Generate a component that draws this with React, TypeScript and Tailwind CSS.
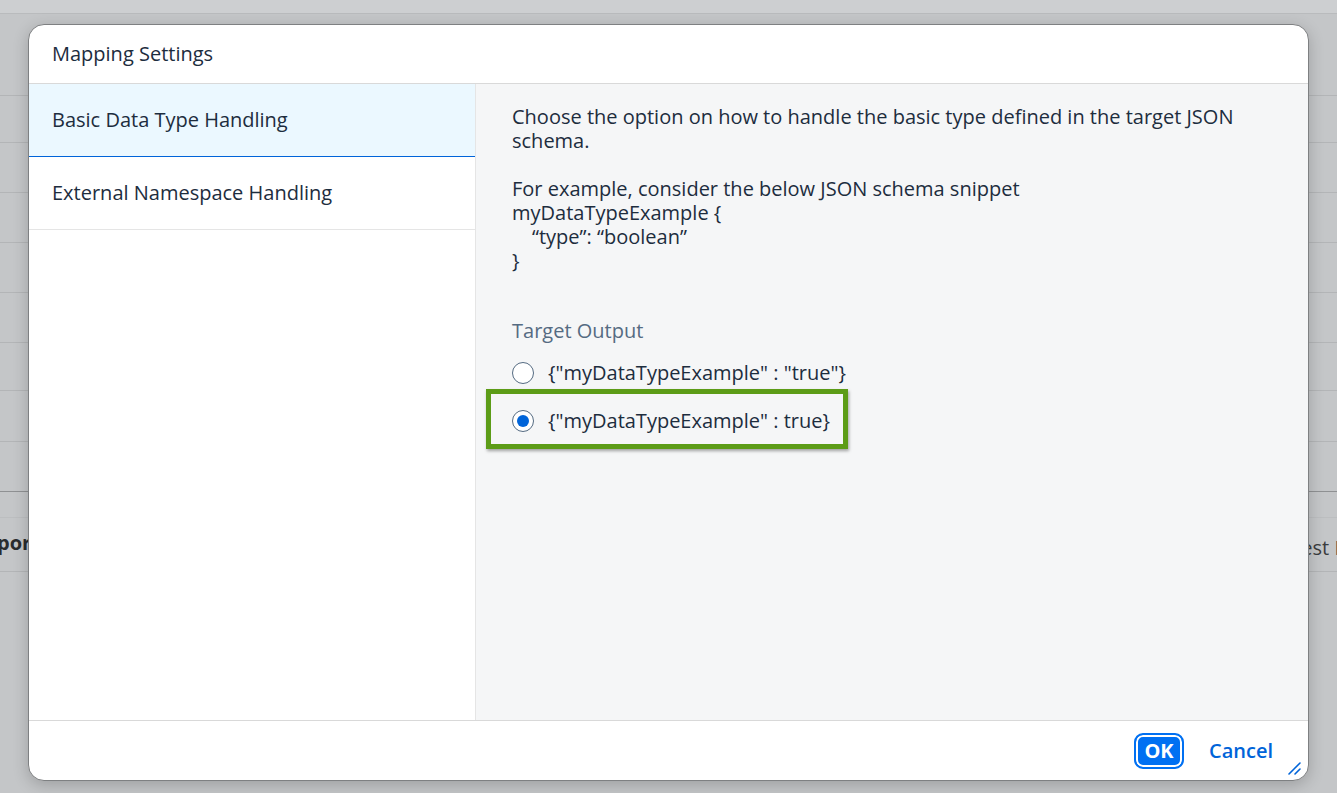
import React, { useState } from 'react';

const ROWS = [
  { h: 'h-[14px]', cls: 'bg-[#cdcfd1] border-b border-[#b9bbbd]' },
  { h: 'h-[82px]', cls: 'border-b border-[#b3b5b7]' },
  { h: 'h-[47px]', cls: 'border-b border-[#b3b5b7]' },
  { h: 'h-[50px]', cls: 'border-b border-[#b3b5b7]' },
  { h: 'h-[50px]', cls: 'border-b border-[#b3b5b7]' },
  { h: 'h-[50px]', cls: 'border-b border-[#b3b5b7]' },
  { h: 'h-[50px]', cls: 'border-b border-[#b3b5b7]' },
  { h: 'h-[48px]', cls: 'border-b border-[#b3b5b7]' },
  { h: 'h-[51px]', cls: 'border-b border-[#b3b5b7]' },
  { h: 'h-[50px]', cls: 'border-b border-[#8f9193]' },
];

function Radio({ checked }: { checked: boolean }) {
  return (
    <span className="flex h-[22px] w-[22px] shrink-0 items-center justify-center rounded-full border border-[#556b82] bg-white">
      {checked && <span className="h-[12px] w-[12px] rounded-full bg-[#0064d9]" />}
    </span>
  );
}

export default function App() {
  const [tab, setTab] = useState(0);
  const [choice, setChoice] = useState(1);

  const options = ['{"myDataTypeExample" : "true"}', '{"myDataTypeExample" : true}'];

  return (
    <div
      className="relative h-[793px] w-[1337px] overflow-hidden bg-[#c4c6c8] text-[#1d2d3e]"
      style={{ fontFamily: '"Open Sans", "Liberation Sans", Arial, sans-serif' }}
    >
      {/* page behind the dialog */}
      <div className="flex flex-col">
        {ROWS.map((r, i) => (
          <div key={i} className={`${r.h} ${r.cls}`} />
        ))}
        <div className="h-[26px] border-b border-[#bcbec0]" />
        <div className="flex h-[54px] items-center justify-between border-b border-[#b3b5b7] pb-[4px] text-[20px]">
          <span className="-ml-[3px] font-bold text-[#2a2c2e]">por</span>
          <span className="-mr-[3px] pt-[10px] text-[#3a3c3e]">est I</span>
        </div>
      </div>

      {/* dialog */}
      <div className="absolute left-[28px] top-[24px] flex h-[757px] w-[1281px] flex-col overflow-hidden rounded-[16px] border border-[#7e8082] bg-white shadow-[0_4px_16px_rgba(0,0,0,0.2)]">
        <header className="flex h-[59px] shrink-0 items-center border-b border-[#d9d9d9] px-[23px] text-[20px]">
          Mapping Settings
        </header>

        <div className="flex min-h-0 flex-1">
          <nav className="w-[447px] shrink-0 border-r border-[#e5e5e5] bg-white">
            {['Basic Data Type Handling', 'External Namespace Handling'].map((label, i) => (
              <button
                key={label}
                onClick={() => setTab(i)}
                className={`flex h-[73px] w-full items-center px-[23px] text-left text-[20px] ${
                  tab === i ? 'border-b border-[#0064d9] bg-[#ebf8ff]' : 'border-b border-[#e5e5e5]'
                }`}
              >
                {label}
              </button>
            ))}
          </nav>

          <section className="flex-1 bg-[#f5f6f7] pl-[36px] pr-[30px] pt-[21px] text-[20px] leading-[24px]">
            <p>Choose the option on how to handle the basic type defined in the target JSON schema.</p>
            <p className="mt-[24px]">For example, consider the below JSON schema snippet</p>
            <p>myDataTypeExample {'{'}</p>
            <p className="pl-[20px]">“type”: “boolean”</p>
            <p>{'}'}</p>

            <div className="mt-[46px] text-[#556b82]">Target Output</div>
            <div className="relative mt-[18px] flex flex-col gap-[24px]">
              {options.map((opt, i) => (
                <label
                  key={opt}
                  onClick={() => setChoice(i)}
                  className="flex h-[24px] cursor-pointer items-center gap-[14px]"
                >
                  <Radio checked={choice === i} />
                  <span>{opt}</span>
                </label>
              ))}
              {/* highlight annotation */}
              <div className="pointer-events-none absolute left-[-26px] top-[28px] h-[60px] w-[362px] border-[5px] border-[#5c9c17] shadow-[1px_2px_3px_rgba(0,0,0,0.35)]" />
            </div>
          </section>
        </div>

        <footer className="relative flex h-[60px] shrink-0 items-center justify-end gap-[25px] border-t border-[#d9d9d9] pr-[35px]">
          <button className="flex h-[36px] w-[50px] items-center justify-center rounded-[9px] border-2 border-[#0070f2] bg-[#0070f2] text-[20px] font-bold text-white shadow-[inset_0_0_0_2px_#ffffff]">
            OK
          </button>
          <button className="text-[20px] font-semibold text-[#0064d9]">Cancel</button>
          <svg className="absolute bottom-[4px] right-[6px]" width="16" height="16" viewBox="0 0 16 16">
            <path d="M14 3 L3 14 M14 9 L9 14" stroke="#0064d9" strokeWidth="1.6" strokeLinecap="round" />
          </svg>
        </footer>
      </div>
    </div>
  );
}
